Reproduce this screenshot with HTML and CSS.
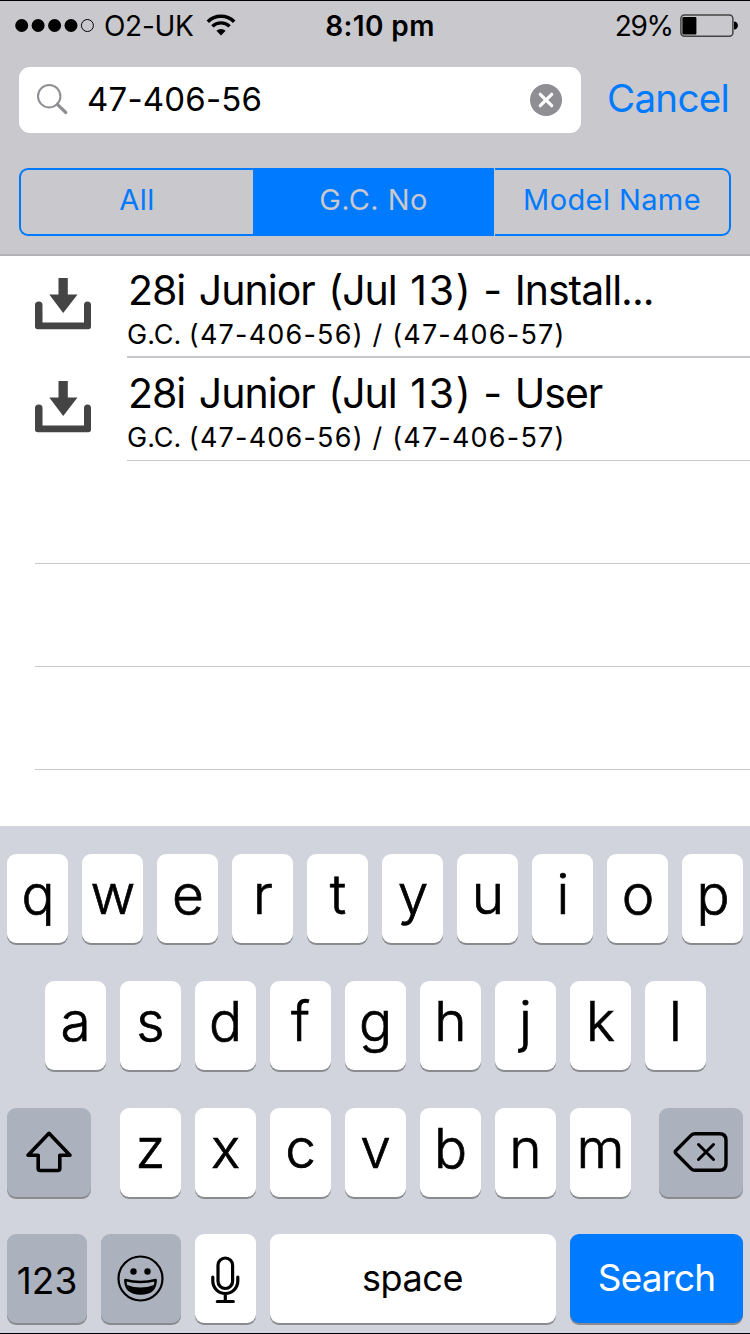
FILE: index.html
```html
<!DOCTYPE html>
<html lang="en">
<head>
  <meta charset="UTF-8" />
  <title>Search</title>
  <link rel="stylesheet" href="styles.css">
</head>
<body>

  <header class="top">
    <div class="status">
      <div class="carrier">
        <svg class="dots" width="80" height="16" viewBox="0 0 80 16">
          <circle cx="6.7" cy="7.5" r="6.5"/>
          <circle cx="23.1" cy="7.5" r="6.5"/>
          <circle cx="39.6" cy="7.5" r="6.5"/>
          <circle cx="56" cy="7.5" r="6.5"/>
          <circle cx="72.4" cy="7.5" r="6" fill="none" stroke="#000" stroke-width="1"/>
        </svg>
        <span class="network">O2-UK</span>
        <svg width="30" height="24" viewBox="0 0 30 24" fill="none" stroke="#000" stroke-width="3.4">
          <path d="M1.8 7.7a18.6 18.6 0 0 1 26.4 0"/>
          <path d="M6.4 12.4a12.2 12.2 0 0 1 17.2 0"/>
          <path d="M15 21.500l-4.6-4.7a6.6 6.6 0 0 1 9.2 0z" fill="#000" stroke="none"/>
        </svg>
      </div>
      <div class="time">8:10 pm</div>
      <div class="power">
        <span class="percent">29%</span>
        <svg width="58" height="24" viewBox="0 0 58 24">
          <rect x="0.9" y="1" width="52" height="21.3" rx="3.5" fill="none" stroke="#444" stroke-width="1.5"/>
          <rect x="2.4" y="3" width="14" height="17.6" rx="1"/>
          <path d="M54 7.6c5.2 0 5.2 8 0 8z"/>
        </svg>
      </div>
    </div>

    <div class="search">
      <div class="field">
        <svg class="glass" width="34" height="34" viewBox="0 0 34 34" fill="none" stroke="#8e8e93">
          <circle cx="13.2" cy="13.2" r="11.2" stroke-width="2"/>
          <path d="M21.3 21.3L29.8 29.500" stroke-width="3.2" stroke-linecap="round"/>
        </svg>
        <span class="query">47-406-56</span>
        <svg class="clear" width="33" height="33" viewBox="0 0 33 33">
          <circle cx="16" cy="16" r="16" fill="#8e8e93"/>
          <path d="M10.3 10.3l11.4 11.4M21.7 10.3l-11.4 11.4" stroke="#fff" stroke-width="3.2" stroke-linecap="round"/>
        </svg>
      </div>
      <span class="cancel">Cancel</span>
    </div>

    <div class="scopes">
      <div class="scope all"><span>All</span></div>
      <div class="scope gc active"><span>G.C. No</span></div>
      <div class="scope model"><span>Model Name</span></div>
    </div>
  </header>

  <main class="results">
    <div class="row first">
      <svg class="download" width="56" height="52" viewBox="0 0 56 52">
        <path d="M23.5 0h9.3v16.5h9.7L28.2 35 14.3 16.5h9.2z" fill="#444"/>
        <path d="M0 27q0-3.5 3.8-3.5T7.5 27v17.5h41.5V27q0-3.5 3.5-3.5T56 27v21.5q0 2.7-2.7 2.7H2.7Q0 51.2 0 48.5z" fill="#444"/>
      </svg>
      <div class="info">
        <div class="title">28i Junior (Jul <span class="num">13</span>) - Install...</div>
        <div class="codes">G.C. <span class="num">(47-406-56) / (47-406-57)</span></div>
      </div>
    </div>
    <div class="row">
      <svg class="download" width="56" height="52" viewBox="0 0 56 52">
        <path d="M23.5 0h9.3v16.5h9.7L28.2 35 14.3 16.5h9.2z" fill="#444"/>
        <path d="M0 27q0-3.5 3.8-3.5T7.5 27v17.5h41.5V27q0-3.5 3.5-3.5T56 27v21.5q0 2.7-2.7 2.7H2.7Q0 51.2 0 48.5z" fill="#444"/>
      </svg>
      <div class="info">
        <div class="title">28i Junior (Jul <span class="num">13</span>) - User</div>
        <div class="codes">G.C. <span class="num">(47-406-56) / (47-406-57)</span></div>
      </div>
    </div>
    <div class="empty"></div>
    <div class="empty"></div>
    <div class="empty"></div>
  </main>

  <div class="keyboard">
    <div class="keys">
      <div class="key">q</div><div class="key">w</div><div class="key">e</div><div class="key">r</div><div class="key">t</div><div class="key">y</div><div class="key">u</div><div class="key">i</div><div class="key">o</div><div class="key">p</div>
    </div>
    <div class="keys">
      <div class="key">a</div><div class="key">s</div><div class="key">d</div><div class="key">f</div><div class="key">g</div><div class="key">h</div><div class="key">j</div><div class="key">k</div><div class="key">l</div>
    </div>
    <div class="keys spread">
      <div class="key dark wide">
        <svg width="48" height="44" viewBox="0 0 48 44" fill="none" stroke="#000" stroke-width="3.6" stroke-linejoin="round">
          <path d="M24 3.3L3 25.3h10.2v13.2q0 2 2 2h17.6q2 0 2-2V25.3H45z"/>
        </svg>
      </div>
      <div class="letters">
        <div class="key">z</div><div class="key">x</div><div class="key">c</div><div class="key">v</div><div class="key">b</div><div class="key">n</div><div class="key">m</div>
      </div>
      <div class="key dark wide">
        <svg width="56" height="42" viewBox="0 0 56 42" fill="none" stroke="#000" stroke-width="3.4" stroke-linejoin="round" stroke-linecap="round">
          <path d="M22 2.7h24.5q6.5 0 6.5 6.5v23.6q0 6.5-6.5 6.5H22q-2.3 0-4-1.7L3 22.5q-1.5-1.5 0-3L18 4.4q1.7-1.7 4-1.7z"/>
          <path d="M25.5 13.5l15 15M40.5 13.5l-15 15" stroke-width="3"/>
        </svg>
      </div>
    </div>
    <div class="keys">
      <div class="key dark mode"><span class="digits">123</span></div>
      <div class="key dark mode">
        <svg class="emoji" width="48" height="48" viewBox="0 0 48 48">
          <circle cx="23.5" cy="23.5" r="22" fill="none" stroke="#000" stroke-width="2.2"/>
          <circle cx="16.5" cy="16.5" r="3.2"/>
          <circle cx="30.5" cy="16.5" r="3.2"/>
          <path d="M8.300 25q15.200 4 30.400 0 0 13.500-15.200 13.500T8.300 25z" fill="none" stroke="#000" stroke-width="2.4" stroke-linejoin="round"/>
          <path d="M10 30q13.500 5 27 0-3 8.500-13.500 8.500T10 30z"/>
        </svg>
      </div>
      <div class="key">
        <svg class="mic" width="30" height="48" viewBox="0 0 30 48" fill="none" stroke="#000" stroke-width="3.2" stroke-linecap="round">
          <rect x="7" y="2" width="14.6" height="30.5" rx="7.3"/>
          <path d="M1.8 21v4a12.5 12.5 0 0 0 25 0V21M14.3 38v7M6.3 45.5h16"/>
        </svg>
      </div>
      <div class="key space"><span>space</span></div>
      <div class="key go"><span>Search</span></div>
    </div>
  </div>

</body>
</html>
```
FILE: styles.css
```css
body {
  margin: 0;
  width: 750px;
  height: 1334px;
  box-sizing: border-box;
  border-top: 1px solid #000;
  border-bottom: 1px solid #000;
  background: #fff;
  color: #000;
  font-family: Inter, "Liberation Sans", sans-serif;
  overflow: hidden;
}
svg {
  display: block;
  flex: none;
}
.top {
  height: 255px;
  box-sizing: border-box;
  background: #c9c8cd;
  border-bottom: 2px solid #b1b1b4;
}
.status {
  display: grid;
  grid-template-columns: 300px 160px 1fr;
  height: 48px;
  align-items: center;
  font-size: 28px;
  line-height: 48px;
}
.carrier {
  display: flex;
  align-items: center;
  padding-left: 15px;
}
.network {
  width: 91px;
  margin: 1px 11px 0 9px;
  letter-spacing: -0.3px;
}
.time {
  text-align: center;
  font-weight: 600;
  letter-spacing: 0.4px;
}
.power {
  display: flex;
  align-items: center;
  justify-content: flex-end;
  gap: 7px;
  padding-right: 12.5px;
}
.percent {
  padding-top: 1px;
  letter-spacing: -1.4px;
}
.search {
  display: flex;
  align-items: center;
  margin-top: 18px;
  padding-left: 19px;
}
.field {
  display: flex;
  align-items: center;
  width: 562px;
  height: 66px;
  box-sizing: border-box;
  padding: 0 18px 0 17px;
  border-radius: 11px;
  background: #fff;
}
.query {
  flex: 1;
  margin-left: 17px;
  padding-bottom: 2px;
  font-size: 33px;
  letter-spacing: 0.2px;
}
.cancel {
  margin-left: 26px;
  padding-bottom: 4px;
  font-size: 38.5px;
  letter-spacing: -0.7px;
  color: #007aff;
}
.scopes {
  display: flex;
  margin: 35px 19px 0;
  height: 68px;
  color: #007aff;
  font-size: 29px;
  letter-spacing: 0.4px;
}
.scope {
  display: flex;
  align-items: center;
  justify-content: center;
  box-sizing: border-box;
  border: 2px solid #007aff;
  padding-bottom: 6px;
}
.all {
  width: 234px;
  border-right: 0;
  border-radius: 9px 0 0 9px;
}
.gc {
  width: 241px;
}
.model {
  width: 236px;
  margin-left: 1px;
  border-left: 0;
  border-radius: 0 9px 9px 0;
}
.active {
  background: #007aff;
  color: #c9c8cd;
}
.results {
  height: 570px;
}
.row {
  display: flex;
  height: 103px;
  padding-left: 35px;
}
.download {
  margin-top: 23px;
}
.info {
  flex: 1;
  margin-left: 36px;
  padding-top: 10px;
  box-sizing: border-box;
  border-bottom: 1px solid #c8c7cc;
  white-space: nowrap;
}
.first {
  height: 102px;
}
.first .download {
  margin-top: 22px;
}
.first .info {
  padding-top: 9px;
  border-bottom-width: 2px;
}
.title {
  padding-left: 1px;
  font-size: 41px;
  line-height: 50px;
  letter-spacing: -1px;
  word-spacing: 3px;
}
.title .num {
  letter-spacing: 1.8px;
}
.codes {
  font-size: 27px;
  line-height: 39px;
}
.codes .num {
  letter-spacing: 1.2px;
}
.empty {
  height: 102px;
  margin-left: 35px;
  border-bottom: 1px solid #c8c7cc;
}
.keyboard {
  height: 507px;
  box-sizing: border-box;
  padding: 28px 7px 0;
  background: #d1d4dc;
}
.keys {
  display: flex;
  justify-content: center;
  gap: 14px;
  margin-bottom: 37.8px;
}
.letters {
  display: flex;
  gap: 14px;
}
.spread {
  justify-content: space-between;
}
.key {
  display: flex;
  align-items: center;
  justify-content: center;
  width: 61px;
  height: 89px;
  box-sizing: border-box;
  padding: 0 0 9px 1px;
  border-radius: 9px;
  background: #fff;
  box-shadow: 0 2px 0 #898b8f;
  font-size: 55px;
  font-weight: 300;
  -webkit-text-stroke: 0.7px #000;
}
.dark {
  background: #abb2bd;
}
.wide {
  width: 84px;
  padding: 0;
}
.mode {
  width: 80px;
  padding: 0;
}
.digits {
  font-size: 37px;
  font-weight: 400;
  padding-top: 3px;
  -webkit-text-stroke: 0;
}
.mic {
  margin-top: 11px;
}
.space {
  width: 286px;
  padding: 0 1px 2px 0;
  font-size: 36px;
  font-weight: 400;
  letter-spacing: -0.4px;
  -webkit-text-stroke: 0;
}
.go {
  width: 173px;
  padding: 0 0 3px;
  background: #007aff;
  color: #fff;
  font-size: 37px;
  font-weight: 400;
  letter-spacing: -0.9px;
  -webkit-text-stroke: 0;
}
```
